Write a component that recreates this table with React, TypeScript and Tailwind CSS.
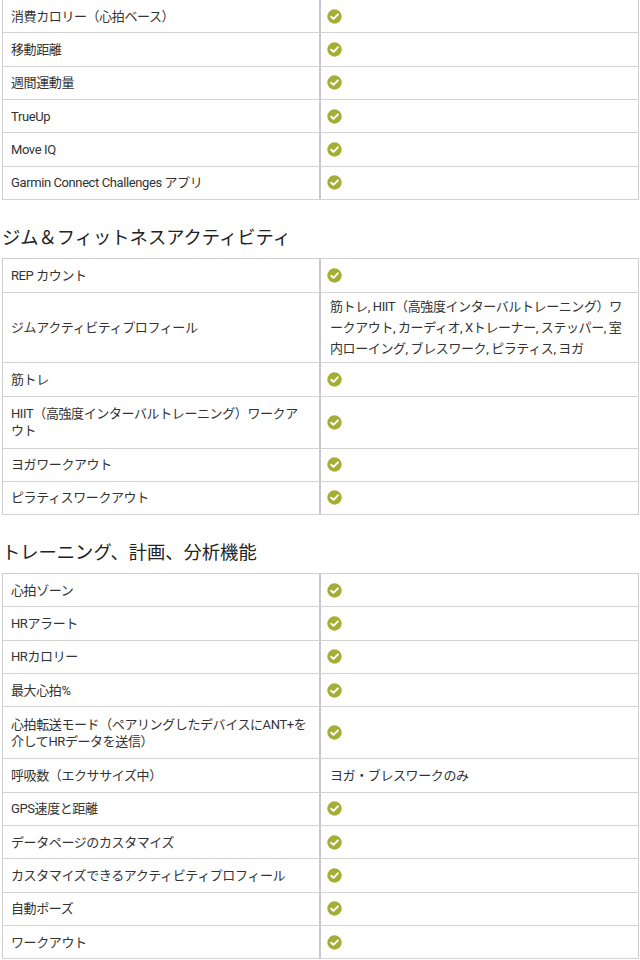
import React from "react";

type Row = { label: string; value?: string; h: string };

const Check = () => (
  <svg width="15" height="15" viewBox="0 0 15 15" className="block -ml-[3px]">
    <circle cx="7.5" cy="7.5" r="7.2" fill="#a5ae34" />
    <path d="M4.2 7.7 L6.5 9.9 L10.9 5.4" fill="none" stroke="#ffffff" strokeWidth="2" strokeLinecap="round" strokeLinejoin="round" />
  </svg>
);

const S = "h-[33.33px]";

const t1: Row[] = [
  { label: "消費カロリー（心拍ベース）", h: S },
  { label: "移動距離", h: S },
  { label: "週間運動量", h: S },
  { label: "TrueUp", h: S },
  { label: "Move IQ", h: S },
  { label: "Garmin Connect Challenges アプリ", h: S },
];

const t2: Row[] = [
  { label: "REP カウント", h: "h-[34px]" },
  {
    label: "ジムアクティビティプロフィール",
    value:
      "筋トレ, HIIT（高強度インターバルトレーニング）ワークアウト, カーディオ, Xトレーナー, ステッパー, 室内ローイング, ブレスワーク, ピラティス, ヨガ",
    h: "h-[70px]",
  },
  { label: "筋トレ", h: "h-[34px]" },
  { label: "HIIT（高強度インターバルトレーニング）ワークアウト", h: "h-[52px]" },
  { label: "ヨガワークアウト", h: "h-[33px]" },
  { label: "ピラティスワークアウト", h: "h-[33px]" },
];

const t3: Row[] = [
  { label: "心拍ゾーン", h: S },
  { label: "HRアラート", h: S },
  { label: "HRカロリー", h: S },
  { label: "最大心拍%", h: S },
  { label: "心拍転送モード（ペアリングしたデバイスにANT+を介してHRデータを送信）", h: "h-[52px]" },
  { label: "呼吸数（エクササイズ中）", value: "ヨガ・ブレスワークのみ", h: S },
  { label: "GPS速度と距離", h: S },
  { label: "データページのカスタマイズ", h: S },
  { label: "カスタマイズできるアクティビティプロフィール", h: S },
  { label: "自動ポーズ", h: S },
  { label: "ワークアウト", h: S },
];

const Table = ({ rows, top }: { rows: Row[]; top: boolean }) => (
  <div
    className={
      "ml-[2px] w-[637px] border-l border-r border-[#cfcfcf] " + (top ? "border-t" : "")
    }
  >
    {rows.map((r, i) => (
      <div key={i} className={"flex border-b border-[#d3d3d3] " + r.h}>
        <div className="w-[316px] flex items-center pl-[8px] pr-[10px] text-[13px] leading-[17px] tracking-[-0.4px] text-[#333333] break-all [line-break:anywhere]">
          {r.label}
        </div>
        <div className="w-[2px] bg-[#cac6cf]" />
        <div className="flex-1 flex items-center pl-[9px] pr-[6px] text-[13px] leading-[21px] tracking-[-0.4px] text-[#333333] break-all [line-break:anywhere]">
          {r.value ? r.value : <Check />}
        </div>
      </div>
    ))}
  </div>
);

const Heading = ({ children }: { children: React.ReactNode }) => (
  <div className="pl-[2px] pt-[24px] pb-[6px] text-[18.3px] leading-[28px] text-[#222222]">
    {children}
  </div>
);

export default function App() {
  return (
    <div
      className="w-[640px] h-[960px] overflow-hidden bg-white"
      style={{ fontFamily: 'Roboto, "Noto Sans CJK JP", sans-serif' }}
    >
      <Table rows={t1} top={false} />
      <Heading>ジム＆フィットネスアクティビティ</Heading>
      <Table rows={t2} top={true} />
      <Heading>トレーニング、計画、分析機能</Heading>
      <Table rows={t3} top={true} />
    </div>
  );
}
